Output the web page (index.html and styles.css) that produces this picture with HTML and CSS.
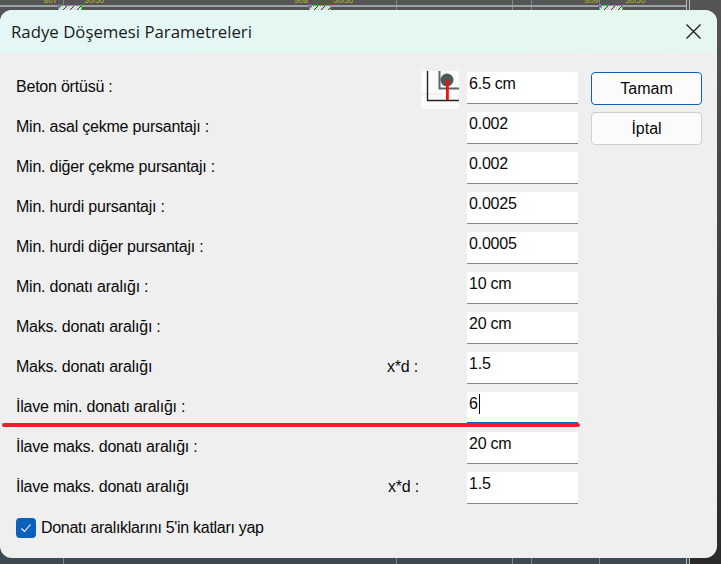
FILE: index.html
```html
<!DOCTYPE html>
<html lang="tr">
<head>
  <meta charset="UTF-8" />
  <title>Radye Döşemesi Parametreleri</title>
  <link rel="stylesheet" href="styles.css">
</head>
<body>
  <div class="backdrop">
    <div class="beam beam-1"><span>S07</span><i></i><span>50/50</span></div>
    <div class="beam beam-2"><span>S08</span><i></i><span>50/50</span></div>
    <div class="beam beam-3"><span>S09</span><i></i><span>50/50</span></div>
  </div>

  <div class="dialog">
    <div class="title-bar">
      <div class="title">Radye Döşemesi Parametreleri</div>
      <svg class="close" width="15" height="15" viewBox="0 0 15 15">
        <path d="M0.5 0.5 L14.5 14.5 M14.5 0.5 L0.5 14.5" stroke="#1a1a1a" stroke-width="1.3" fill="none" />
      </svg>
    </div>

    <div class="content">
      <div class="fields">
        <div class="row">
          <label>Beton örtüsü :</label>
          <svg class="cover-icon" width="38" height="38" viewBox="0 0 38 38">
            <rect width="38" height="38" fill="#fbfbfb" />
            <path d="M0 23 H22" stroke="#fbdede" stroke-width="1" fill="none" />
            <path d="M6.5 0 V29.5 H38" stroke="#222" stroke-width="1.4" fill="none" />
            <path d="M18.5 0 V17.5 H38" stroke="#5c6668" stroke-width="2" fill="none" />
            <circle cx="26" cy="9" r="6.5" fill="#4a5a58" />
            <rect x="25" y="9" width="2.8" height="20" fill="#f01010" />
          </svg>
          <input class="value" value="6.5 cm" />
        </div>
        <div class="row"><label>Min. asal çekme pursantajı :</label><input class="value" value="0.002" /></div>
        <div class="row"><label>Min. diğer çekme pursantajı :</label><input class="value" value="0.002" /></div>
        <div class="row"><label>Min. hurdi pursantajı :</label><input class="value" value="0.0025" /></div>
        <div class="row"><label>Min. hurdi diğer pursantajı :</label><input class="value" value="0.0005" /></div>
        <div class="row"><label>Min. donatı aralığı :</label><input class="value" value="10 cm" /></div>
        <div class="row"><label>Maks. donatı aralığı :</label><input class="value" value="20 cm" /></div>
        <div class="row">
          <label>Maks. donatı aralığı</label>
          <span class="factor">x*d :</span>
          <input class="value" value="1.5" />
        </div>
        <div class="row">
          <label>İlave min. donatı aralığı :</label>
          <div class="value focused">6<span class="caret"></span></div>
        </div>
        <div class="row"><label>İlave maks. donatı aralığı :</label><input class="value" value="20 cm" /></div>
        <div class="row">
          <label>İlave maks. donatı aralığı</label>
          <span class="factor factor-low">x*d :</span>
          <input class="value" value="1.5" />
        </div>
        <div class="check-row">
          <span class="checkbox">
            <svg width="12" height="10" viewBox="0 0 12 10">
              <path d="M1.5 5.5 L4.5 8.5 L10.5 1.5" stroke="#fff" stroke-width="1.1" fill="none" />
            </svg>
          </span>
          <span>Donatı aralıklarını 5'in katları yap</span>
        </div>
      </div>

      <div class="buttons">
        <button class="primary">Tamam</button>
        <button>İptal</button>
      </div>
    </div>

    <div class="red-line"></div>
  </div>
</body>
</html>
```

FILE: styles.css
```css
html, body {
  margin: 0;
  height: 100%;
}
body {
  width: 721px;
  height: 564px;
  overflow: hidden;
  position: relative;
  background: #3d4a52;
  font-family: "Liberation Sans", Arial, sans-serif;
  color: #0a0a0a;
}

/* drawing that shows around the dialog */
.backdrop {
  position: absolute;
  inset: 0;
  background:
    linear-gradient(#9aa3a8, #9aa3a8) 0 5px / 686px 2px no-repeat,
    linear-gradient(#b8bec2, #b8bec2) 686px 0 / 1px 100% no-repeat,
    linear-gradient(#b8bec2, #b8bec2) 689px 0 / 1px 100% no-repeat,
    linear-gradient(#7d868c, #7d868c) 63px 0 / 1px 100% no-repeat,
    linear-gradient(#7d868c, #7d868c) 396px 0 / 1px 100% no-repeat,
    linear-gradient(#7d868c, #7d868c) 512px 0 / 1px 100% no-repeat,
    linear-gradient(#7d868c, #7d868c) 531px 0 / 1px 100% no-repeat,
    linear-gradient(#7d868c, #7d868c) 599px 0 / 1px 100% no-repeat,
    linear-gradient(#555, #2a2a2a) 690px 0 / 31px 100% no-repeat,
    linear-gradient(#555 0 20px, #3d4a52 20px);
}
.beam {
  position: absolute;
  top: -3px;
  display: flex;
  gap: 1px;
  font-size: 8px;
  line-height: 8px;
  color: #b9b925;
}
.beam i {
  position: relative;
  display: block;
  width: 24px;
  height: 5px;
  margin: 8px 1px 0 0;
  box-sizing: border-box;
  background: repeating-linear-gradient(135deg, #333 0 1.2px, #ddd 1.2px 5px);
  border: 1px solid #1fdc1f;
  border-bottom: none;
}
.beam i::before {
  content: "";
  position: absolute;
  left: -2px;
  top: -2px;
  width: 4px;
  height: 4px;
  border-radius: 50%;
  background: #9565c4;
}
.beam-1 { left: 43px; }
.beam-2 { left: 294px; }
.beam-2 i { width: 22px; }
.beam-3 { left: 584px; }

.dialog {
  position: absolute;
  left: 0;
  top: 10px;
  width: 717px;
  height: 548px;
  background: #efefef;
  border-radius: 12px;
  overflow: hidden;
}
.title-bar {
  height: 43px;
  display: flex;
  align-items: center;
  justify-content: space-between;
  padding: 0 16px 0 11px;
  background: linear-gradient(90deg, #e4f7f6, #e5f7ee);
}
.title {
  font-family: "Open Sans", sans-serif;
  font-size: 16.8px;
  color: #1a1a1a;
}
.content {
  display: flex;
  padding: 19px 15px 0 16px;
}
.fields {
  width: 562px;
  margin-right: 13px;
}
.row {
  display: flex;
  align-items: center;
  height: 32px;
  margin-bottom: 8px;
  font-size: 16px;
  letter-spacing: -0.22px;
}
.row label {
  flex: 1;
  padding-bottom: 3px;
}
.factor {
  width: 80px;
  padding-bottom: 3px;
}
.factor-low {
  width: 79px;
}
.cover-icon {
  margin-right: 8px;
  margin-top: 4px;
  filter: blur(0.4px);
}
.value {
  width: 111px;
  height: 32px;
  box-sizing: border-box;
  padding: 0 2px 7px;
  border: none;
  border-bottom: 1px solid #868686;
  background: #fff;
  font: inherit;
  letter-spacing: inherit;
  color: #0a0a0a;
  outline: none;
}
.focused {
  display: flex;
  align-items: center;
  border-bottom: 2px solid #0a62b8;
}
.caret {
  width: 1px;
  height: 20px;
  background: #111;
  margin-left: 1px;
}
.check-row {
  display: flex;
  align-items: center;
  gap: 5px;
  margin-top: 14px;
  font-size: 16px;
  letter-spacing: -0.3px;
}
.checkbox {
  width: 20px;
  height: 20px;
  border-radius: 4px;
  background: #0a62bd;
  display: flex;
  align-items: center;
  justify-content: center;
}
.buttons {
  display: flex;
  flex-direction: column;
  gap: 7px;
  width: 111px;
}
button {
  height: 33px;
  box-sizing: border-box;
  background: #fbfbfb;
  border: 1px solid #cfcfcf;
  border-radius: 4px;
  font-family: "Liberation Sans", Arial, sans-serif;
  font-size: 16px;
  color: #0a0a0a;
}
button.primary {
  border: 1px solid #0a62b8;
}
.red-line {
  position: absolute;
  left: 2px;
  top: 413px;
  width: 578px;
  height: 4px;
  border-radius: 2px;
  background: #ee2030;
}
```
